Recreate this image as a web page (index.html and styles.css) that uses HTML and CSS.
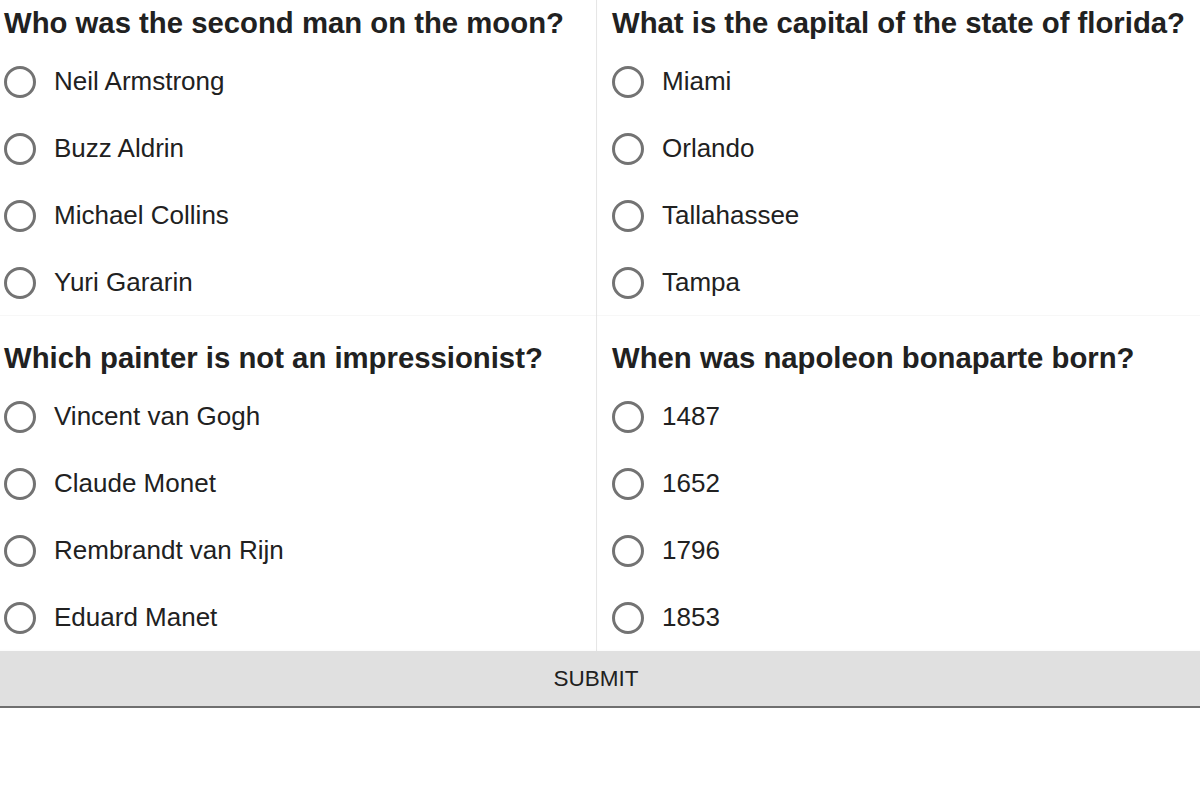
FILE: index.html
```html
<!DOCTYPE html>
<html lang="en">
<head>
<meta charset="utf-8">
<title>Quiz</title>
<link rel="stylesheet" href="styles.css">
</head>
<body>
<form class="quiz">
  <div class="grid">
    <fieldset class="card">
      <h2 class="question">Who was the second man on the moon?</h2>
      <label class="option"><input type="radio" name="q1" class="radio"><span>Neil Armstrong</span></label>
      <label class="option"><input type="radio" name="q1" class="radio"><span>Buzz Aldrin</span></label>
      <label class="option"><input type="radio" name="q1" class="radio"><span>Michael Collins</span></label>
      <label class="option"><input type="radio" name="q1" class="radio"><span>Yuri Gararin</span></label>
    </fieldset>
    <fieldset class="card">
      <h2 class="question">What is the capital of the state of florida?</h2>
      <label class="option"><input type="radio" name="q2" class="radio"><span>Miami</span></label>
      <label class="option"><input type="radio" name="q2" class="radio"><span>Orlando</span></label>
      <label class="option"><input type="radio" name="q2" class="radio"><span>Tallahassee</span></label>
      <label class="option"><input type="radio" name="q2" class="radio"><span>Tampa</span></label>
    </fieldset>
    <fieldset class="card">
      <h2 class="question">Which painter is not an impressionist?</h2>
      <label class="option"><input type="radio" name="q3" class="radio"><span>Vincent van Gogh</span></label>
      <label class="option"><input type="radio" name="q3" class="radio"><span>Claude Monet</span></label>
      <label class="option"><input type="radio" name="q3" class="radio"><span>Rembrandt van Rijn</span></label>
      <label class="option"><input type="radio" name="q3" class="radio"><span>Eduard Manet</span></label>
    </fieldset>
    <fieldset class="card">
      <h2 class="question">When was napoleon bonaparte born?</h2>
      <label class="option"><input type="radio" name="q4" class="radio"><span>1487</span></label>
      <label class="option"><input type="radio" name="q4" class="radio"><span>1652</span></label>
      <label class="option"><input type="radio" name="q4" class="radio"><span>1796</span></label>
      <label class="option"><input type="radio" name="q4" class="radio"><span>1853</span></label>
    </fieldset>
  </div>
  <button type="button" class="submit">SUBMIT</button>
</form>
</body>
</html>
```
FILE: styles.css
```css
html {
  margin: 0;
  padding: 0;
  overflow: hidden;
  background: #ffffff;
}

body {
  margin: 0;
  padding: 0;
  font-family: "Liberation Sans", Arial, Helvetica, sans-serif;
  color: #212121;
}

.quiz {
  width: 1216px;
  margin: -19px 0 0 -12px;
}

.grid {
  display: grid;
  grid-template-columns: 1fr 1fr;
}

.card {
  margin: 0;
  border: 0;
  min-width: 0;
  padding: 25px 16px 0 16px;
  background: #ffffff;
  box-shadow: 0 0 1px rgba(0, 0, 0, 0.2), 0 2px 4px rgba(0, 0, 0, 0.03);
  display: flex;
  flex-direction: column;
}

.card:nth-child(odd) {
  box-shadow: 1px 0 0 #e6e6e6, 0 0 1px rgba(0, 0, 0, 0.2), 0 2px 4px rgba(0, 0, 0, 0.03);
  position: relative;
  z-index: 1;
}

.question {
  margin: 0 0 8px 0;
  font-size: 29.3px;
  line-height: 34px;
  font-weight: bold;
  white-space: nowrap;
  color: #212121;
}

.option {
  height: 67px;
  display: flex;
  align-items: center;
  gap: 18px;
  font-size: 26px;
  color: #212121;
  cursor: pointer;
}

.radio {
  appearance: none;
  -webkit-appearance: none;
  margin: 0;
  width: 32px;
  height: 32px;
  box-sizing: border-box;
  border: 3px solid #737373;
  border-radius: 50%;
  background: #ffffff;
  flex: none;
}

.submit {
  appearance: none;
  -webkit-appearance: none;
  display: block;
  box-sizing: border-box;
  width: 100%;
  height: 57px;
  margin: 0;
  border: 0;
  border-bottom: 2px solid #6f6f6f;
  border-radius: 0;
  background: #e0e0e0;
  font-family: "Liberation Sans", Arial, Helvetica, sans-serif;
  font-size: 22.5px;
  color: #212121;
  padding: 0;
  box-shadow: 0 2px 4px rgba(0, 0, 0, 0.12);
  position: relative;
  z-index: 2;
}
```
